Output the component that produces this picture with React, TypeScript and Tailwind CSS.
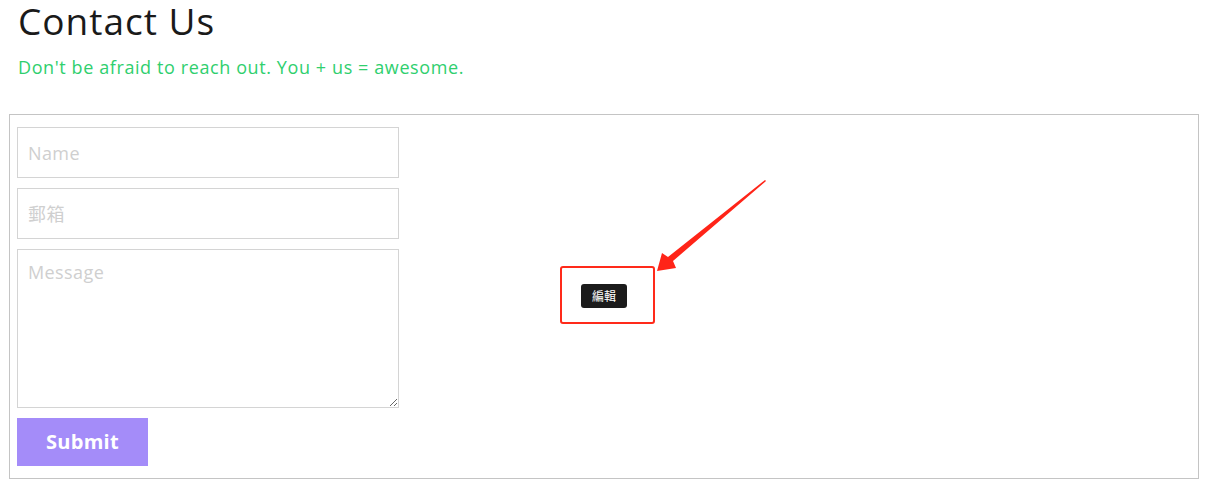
import React from "react";

const fieldClass =
  "w-[382px] border border-[#d4d4d4] px-[10px] text-[18px] tracking-[0.4px] text-[#333] outline-none placeholder:text-[#cfcfcf]";

const ContactForm = () => {
  return (
    <form className="flex flex-col gap-[10px]" onSubmit={(e) => e.preventDefault()}>
      <input type="text" placeholder="Name" className={`h-[51px] ${fieldClass}`} />
      <input type="email" placeholder="郵箱" className={`h-[51px] ${fieldClass}`} />
      <textarea placeholder="Message" className={`h-[159px] py-[9px] ${fieldClass}`} />
      <button
        type="submit"
        className="h-[48px] w-[131px] bg-[#a48cf9] text-[20px] font-bold tracking-[0.3px] text-white"
      >
        Submit
      </button>
    </form>
  );
};

export default function App() {
  return (
    <div
      className="relative h-[483px] w-[1207px] overflow-hidden bg-white"
      style={{ fontFamily: '"Open Sans", "Noto Sans CJK TC", sans-serif' }}
    >
      <div className="pl-[18px]">
        <h1 className="text-[37px] leading-[42px] font-normal tracking-[1px] text-[#1a1a1a]">
          Contact Us
        </h1>
        <p className="mt-[13px] text-[18px] leading-[24px] tracking-[0.6px] text-[#2fcf6e]">
          Don't be afraid to reach out. You + us = awesome.
        </p>
      </div>

      <div className="mt-[35px] ml-[9px] h-[365px] w-[1190px] border border-[#c4c4c4] px-[7px] pt-[12px]">
        <ContactForm />
      </div>

      {/* annotation overlay */}
      <div className="absolute top-[266px] left-[560px] flex h-[58px] w-[95px] items-start rounded-[3px] border-[2px] border-[#ff2a1a] pt-[16px] pl-[19px]">
        <span
          className="rounded-[3px] bg-[#1b1b1b] px-[11px] py-[2px] text-[12px] leading-[20px] text-white"
          style={{ fontFamily: '"Noto Sans CJK TC", sans-serif' }}
        >
          編輯
        </span>
      </div>
      <svg
        className="pointer-events-none absolute top-0 left-0"
        width="1207"
        height="483"
        viewBox="0 0 1207 483"
      >
        <polygon
          points="765,180 766,181 673,261 676,268 657,271 662,253 668,257"
          fill="#ff2418"
        />
      </svg>
    </div>
  );
}
